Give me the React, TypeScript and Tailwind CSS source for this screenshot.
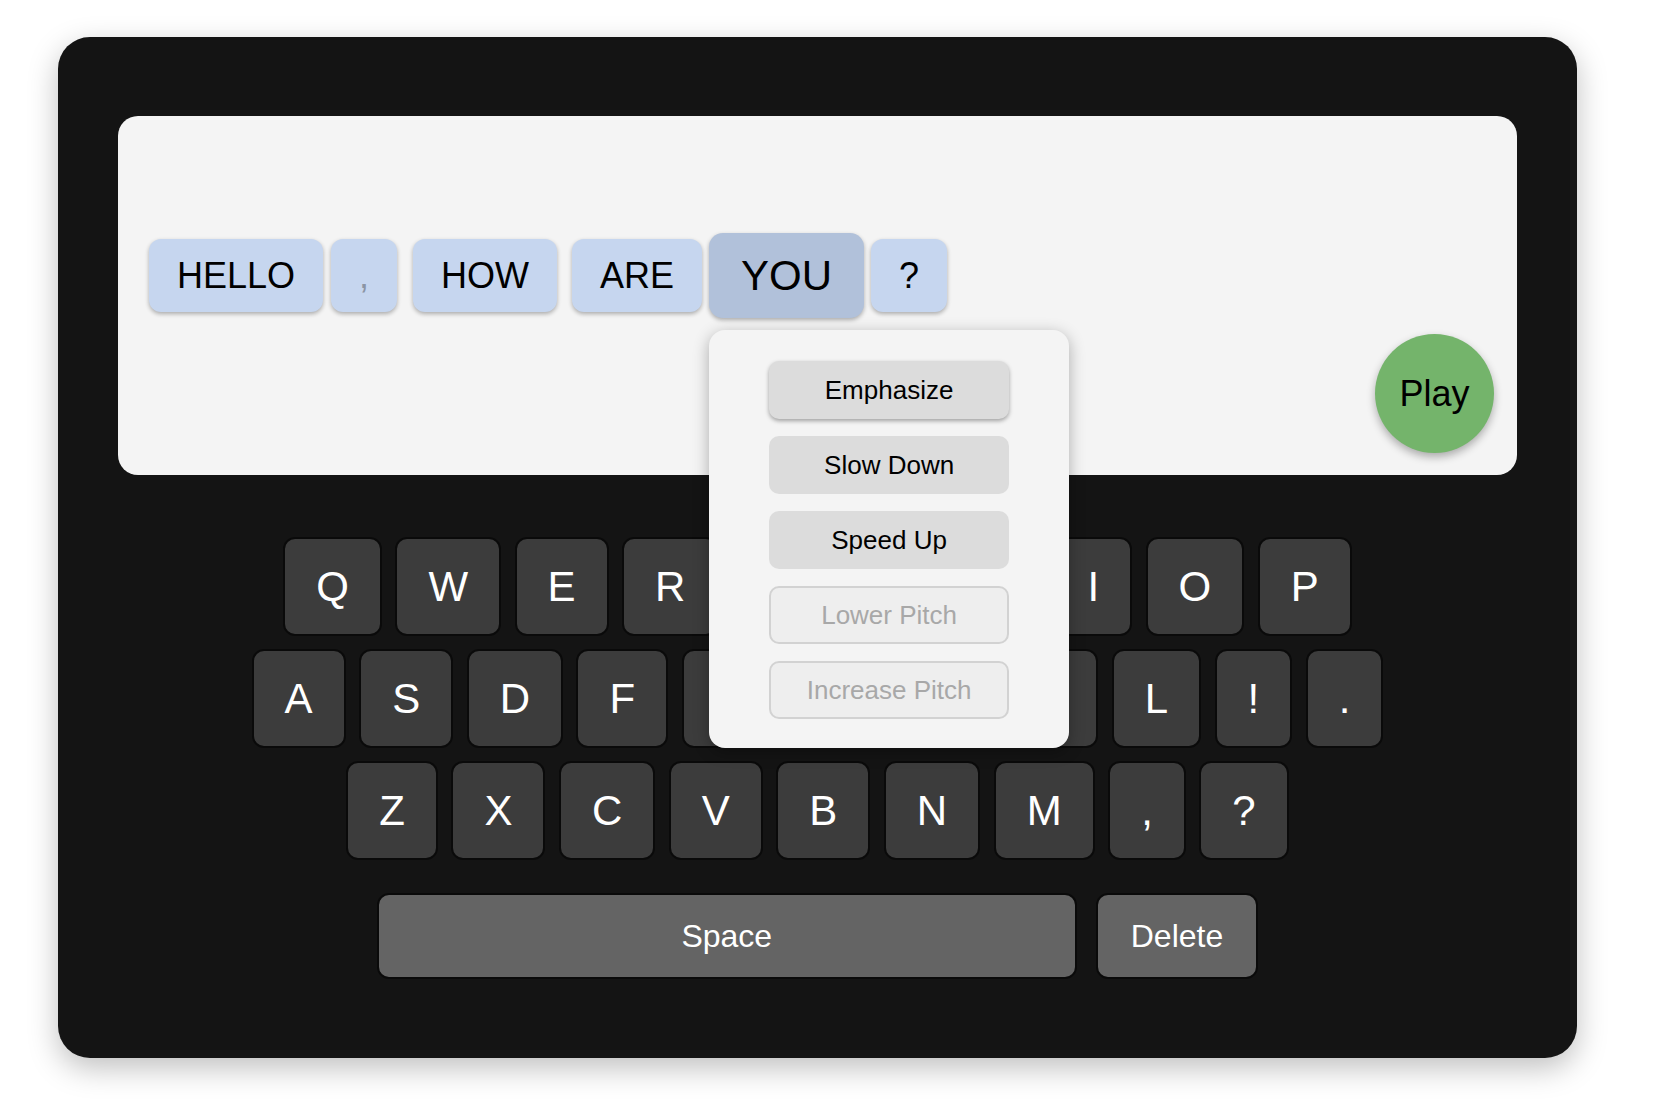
const rows = [
  ["Q", "W", "E", "R", "T", "Y", "U", "I", "O", "P"],
  ["A", "S", "D", "F", "G", "H", "J", "K", "L", "!", "."],
  ["Z", "X", "C", "V", "B", "N", "M", ",", "?"],
];

const actions = [
  { label: "Emphasize", state: "hover" },
  { label: "Slow Down", state: "on" },
  { label: "Speed Up", state: "on" },
  { label: "Lower Pitch", state: "off" },
  { label: "Increase Pitch", state: "off" },
];

function Chip({ text, className = "", muted = false }: { text: string; className?: string; muted?: boolean }) {
  return (
    <div
      className={`flex h-[73px] items-center rounded-[12px] bg-[#c6d6ef] px-[28px] text-[36px] shadow-[0_2px_4px_rgba(0,0,0,0.3)] ${
        muted ? "text-[#8b95a4]" : "text-black"
      } ${className}`}
    >
      {text}
    </div>
  );
}

function ActionMenu() {
  return (
    <div className="absolute left-0 top-[97px] z-10 flex h-[418px] w-[360px] flex-col gap-[17px] rounded-[16px] bg-[#f4f4f4] px-[60px] pt-[31px] shadow-[0_4px_16px_rgba(0,0,0,0.3)]">
      {actions.map((a) => (
        <button
          key={a.label}
          className={`h-[58px] w-full rounded-[10px] text-[26px] ${
            a.state === "off"
              ? "border-2 border-[#d2d2d2] bg-[#eeeeee] text-[#a8a8a8]"
              : "bg-[#dcdcdc] text-black"
          } ${a.state === "hover" ? "shadow-[0_2px_4px_rgba(0,0,0,0.35)]" : ""}`}
        >
          {a.label}
        </button>
      ))}
    </div>
  );
}

function Key({ label }: { label: string }) {
  return (
    <button className="flex h-[99px] items-center justify-center rounded-[12px] border-2 border-[#0a0a0a] bg-[#3c3c3c] px-[31px] text-[42px] text-white">
      {label}
    </button>
  );
}

export default function App() {
  return (
    <div className="min-h-screen bg-white pl-[58px] pt-[37px] font-['Liberation_Sans',Arial,sans-serif]">
      <div className="w-[1519px] rounded-[32px] bg-[#141414] px-[60px] py-[79px] shadow-[0_10px_30px_rgba(0,0,0,0.25)]">
        {/* sentence area */}
        <div className="flex h-[359px] flex-col rounded-[20px] bg-[#f4f4f4] pb-[22px] pl-[31px] pr-[23px] pt-[117px]">
          <div className="flex h-[85px] items-center">
            <Chip text="HELLO" />
            <Chip text="," muted className="ml-[8px]" />
            <Chip text="HOW" className="ml-[16px]" />
            <Chip text="ARE" className="ml-[15px]" />
            <div className="relative ml-[7px]">
              <div className="flex h-[85px] items-center rounded-[14px] bg-[#b1c1da] px-[32px] text-[42px] text-black shadow-[0_2px_4px_rgba(0,0,0,0.3)]">
                YOU
              </div>
              <ActionMenu />
            </div>
            <Chip text="?" className="ml-[7px]" />
          </div>
          <button className="mt-auto flex h-[119px] w-[119px] items-center justify-center self-end rounded-full bg-[#74b46b] text-[36px] text-black shadow-[0_4px_8px_rgba(0,0,0,0.3)]">
            Play
          </button>
        </div>

        {/* keyboard */}
        <div className="mt-[62px] flex flex-col items-center gap-[13px]">
          {rows.map((row, i) => (
            <div key={i} className="flex gap-[13.5px]">
              {row.map((k) => (
                <Key key={k} label={k} />
              ))}
            </div>
          ))}
          <div className="mt-[20px] flex gap-[19px]">
            <button className="h-[86px] w-[700px] rounded-[12px] border-2 border-[#0a0a0a] bg-[#646464] text-[32px] text-white">
              Space
            </button>
            <button className="h-[86px] rounded-[12px] border-2 border-[#0a0a0a] bg-[#646464] px-[33px] text-[32px] text-white">
              Delete
            </button>
          </div>
        </div>
      </div>
    </div>
  );
}
